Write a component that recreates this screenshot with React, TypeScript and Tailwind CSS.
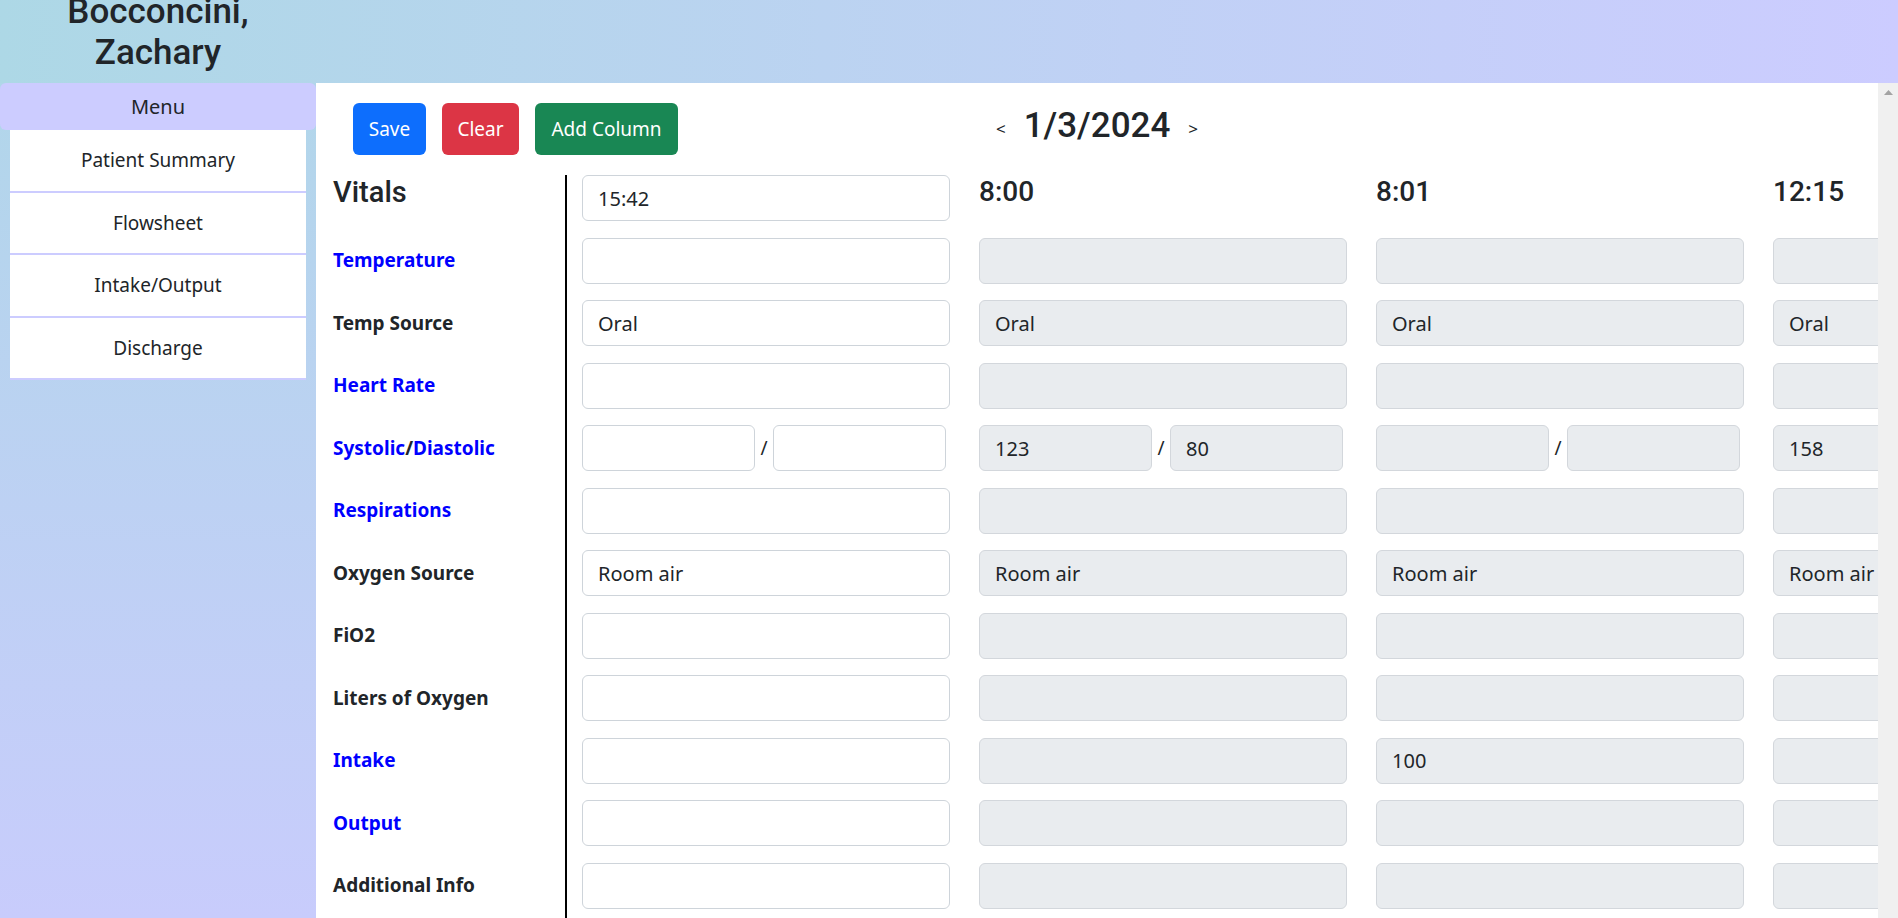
import React from 'react'

/**
 * Flowsheet - vitals grid for one patient day
 */

type Row = { label: React.ReactNode; kind?: 'bp' }

const BLUE = 'text-[#0000ff]'
const DARK = 'text-[#212529]'

const rows: Row[] = [
  { label: <span className={BLUE}>Temperature</span> },
  { label: <span className={DARK}>Temp Source</span> },
  { label: <span className={BLUE}>Heart Rate</span> },
  {
    label: (
      <span>
        <span className={BLUE}>Systolic</span>
        <span className={DARK}>/</span>
        <span className={BLUE}>Diastolic</span>
      </span>
    ),
    kind: 'bp',
  },
  { label: <span className={BLUE}>Respirations</span> },
  { label: <span className={DARK}>Oxygen Source</span> },
  { label: <span className={DARK}>FiO2</span> },
  { label: <span className={DARK}>Liters of Oxygen</span> },
  { label: <span className={BLUE}>Intake</span> },
  { label: <span className={BLUE}>Output</span> },
  { label: <span className={DARK}>Additional Info</span> },
]

// values per column, bp rows hold [systolic, diastolic]
type Column = { time: string; editable?: boolean; values: (string | [string, string])[] }

const columns: Column[] = [
  {
    time: '15:42',
    editable: true,
    values: ['', 'Oral', '', ['', ''], '', 'Room air', '', '', '', '', ''],
  },
  {
    time: '8:00',
    values: ['', 'Oral', '', ['123', '80'], '', 'Room air', '', '', '', '', ''],
  },
  {
    time: '8:01',
    values: ['', 'Oral', '', ['', ''], '', 'Room air', '', '', '100', '', ''],
  },
  {
    time: '12:15',
    values: ['', 'Oral', '', ['158', ''], '', 'Room air', '', '', '', '', ''],
  },
]

const menuItems = ['Patient Summary', 'Flowsheet', 'Intake/Output', 'Discharge']

// headings need a medium weight, Roboto has one
const HEADING = "font-['Roboto',sans-serif] font-medium"

function Field({ value, editable, width }: { value: string; editable?: boolean; width: string }) {
  return (
    <input
      type="text"
      readOnly
      defaultValue={value}
      className={`${width} h-[46px] shrink-0 rounded-md border border-[#ced4da] px-[15px] text-[20px] text-[#212529] outline-none ${
        editable ? 'bg-white' : 'bg-[#e9ecef] border-[#d3d7dc]'
      }`}
    />
  )
}

export default function App() {
  return (
    <div className="flex h-[918px] w-full flex-col overflow-hidden font-['Noto_Sans',sans-serif] text-[#212529]">
      {/* Header */}
      <header className="h-[83px] shrink-0 overflow-hidden bg-linear-to-r from-[#add8e6] to-[#ccccff]">
        <div className={`w-[316px] -mt-[9px] text-center text-[35px] leading-[41px] ${HEADING}`}>
          Bocconcini,
          <br />
          Zachary
        </div>
      </header>

      <div className="flex min-h-0 flex-1">
        {/* Sidebar */}
        <aside className="w-[316px] shrink-0 bg-linear-to-b from-[#b1d6ea] to-[#c8ccfc]">
          <div className="flex h-[47px] items-center justify-center rounded-md bg-[#ccccff] text-[20px]">Menu</div>
          <div className="mx-[10px]">
            {menuItems.map(item => (
              <div
                key={item}
                className="flex h-[62.5px] items-center justify-center border-b-2 border-[#ccccff] bg-white text-[19px]"
              >
                {item}
              </div>
            ))}
          </div>
        </aside>

        {/* Main */}
        <main className="min-w-0 flex-1 overflow-hidden bg-white pt-[20px]">
          <div className="grid h-[52px] grid-cols-3">
            <div className="flex gap-[16px] pl-[37px]">
              <button className="h-[52px] w-[73px] rounded-md bg-[#0d6efd] text-[19px] text-white">Save</button>
              <button className="h-[52px] w-[77px] rounded-md bg-[#dc3545] text-[19px] text-white">Clear</button>
              <button className="h-[52px] w-[143px] rounded-md bg-[#198754] text-[19px] text-white">Add Column</button>
            </div>
            <div className="flex items-center justify-center gap-[18px]">
              <button className="text-[17px]">&lt;</button>
              <span className={`mb-[6px] text-[35px] leading-[1.2] ${HEADING}`}>1/3/2024</span>
              <button className="text-[17px]">&gt;</button>
            </div>
            <div />
          </div>

          <div className="mt-[20px] flex">
            {/* Labels */}
            <div className="flex w-[249px] shrink-0 flex-col gap-y-[16.5px] pl-[17px]">
              <div className={`h-[46px] text-[29px] leading-[1.2] ${HEADING}`}>Vitals</div>
              {rows.map((row, i) => (
                <div key={i} className="flex h-[46px] items-center text-[19px] font-bold">
                  {row.label}
                </div>
              ))}
            </div>

            {/* Columns */}
            <div className="flex gap-[29px] border-l-2 border-black pb-[60px] pl-[15px]">
              {columns.map(col => (
                <div key={col.time} className="flex w-[368px] shrink-0 flex-col gap-y-[16.5px]">
                  {col.editable ? (
                    <Field value={col.time} editable width="w-[368px]" />
                  ) : (
                    <div className={`h-[46px] text-[28px] leading-[1.2] ${HEADING}`}>{col.time}</div>
                  )}
                  {col.values.map((v, i) =>
                    Array.isArray(v) ? (
                      <div key={i} className="flex h-[46px] items-center">
                        <Field value={v[0]} editable={col.editable} width="w-[173px]" />
                        <span className="w-[18px] text-center text-[19px]">/</span>
                        <Field value={v[1]} editable={col.editable} width="w-[173px]" />
                      </div>
                    ) : (
                      <Field key={i} value={v} editable={col.editable} width="w-[368px]" />
                    )
                  )}
                </div>
              ))}
            </div>
          </div>
        </main>

        {/* Scrollbar strip */}
        <div className="flex w-[20px] shrink-0 justify-center bg-[#f0f0f0] pt-[7px]">
          <svg width="9" height="5" viewBox="0 0 9 5">
            <path d="M0 5 L4.5 0 L9 5 Z" fill="#a3a3a3" />
          </svg>
        </div>
      </div>
    </div>
  )
}
